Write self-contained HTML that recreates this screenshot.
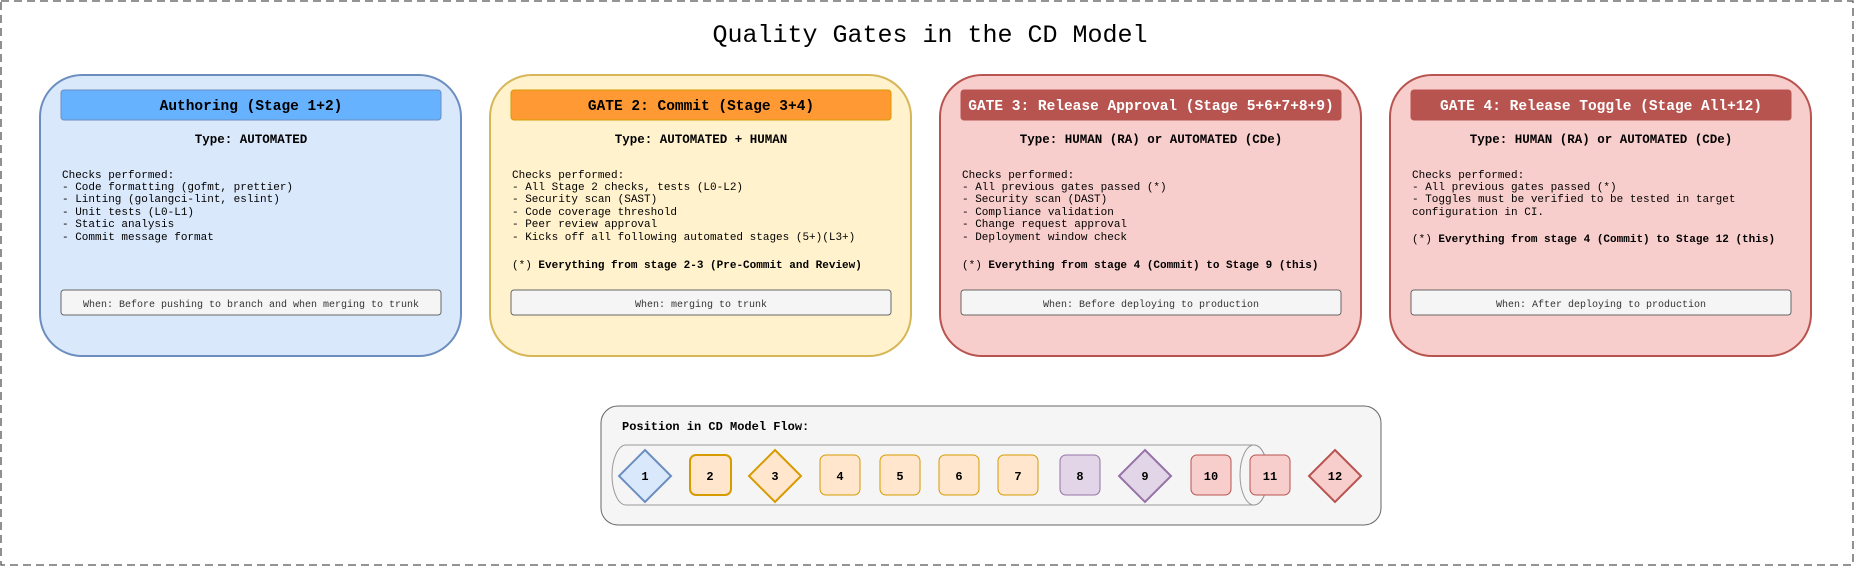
<!DOCTYPE html>
<html><head><meta charset="utf-8"><style>
html,body{margin:0;padding:0;background:#fff;}
svg{display:block;}
text{font-family:"Liberation Mono","DejaVu Sans Mono",monospace;}
</style></head><body>
<svg width="1861" height="567" viewBox="0 0 1861 567" xmlns="http://www.w3.org/2000/svg">
<rect x="1" y="1" width="1852" height="564" fill="#fff" stroke="#555" stroke-width="1.3" stroke-dasharray="8 5"/>
<text x="930" y="42" font-size="25" text-anchor="middle" fill="#000">Quality Gates in the CD Model</text>

<!-- Card 1 -->
<rect x="40" y="75" width="421" height="281" rx="42" fill="#dae8fc" stroke="#6c8ebf" stroke-width="2"/>
<rect x="61" y="90" width="380" height="30" rx="3" fill="#66b2ff" stroke="#6c8ebf"/>
<text x="251" y="110" font-size="14.5" font-weight="bold" text-anchor="middle">Authoring (Stage 1+2)</text>
<text x="251" y="143" font-size="12.5" font-weight="bold" text-anchor="middle">Type: AUTOMATED</text>
<g font-size="11" fill="#000">
<text x="62" y="178">Checks performed:</text>
<text x="62" y="190">- Code formatting (gofmt, prettier)</text>
<text x="62" y="202">- Linting (golangci-lint, eslint)</text>
<text x="62" y="215">- Unit tests (L0-L1)</text>
<text x="62" y="227">- Static analysis</text>
<text x="62" y="240">- Commit message format</text>
</g>
<rect x="61" y="290" width="380" height="25" rx="3" fill="#f5f5f5" stroke="#666"/>
<text x="251" y="307" font-size="10" text-anchor="middle" fill="#333">When: Before pushing to branch and when merging to trunk</text>

<!-- Card 2 -->
<rect x="490" y="75" width="421" height="281" rx="42" fill="#fff2cc" stroke="#d6b656" stroke-width="2"/>
<rect x="511" y="90" width="380" height="30" rx="3" fill="#ff9933" stroke="#d79b00"/>
<text x="701" y="110" font-size="14.5" font-weight="bold" text-anchor="middle">GATE 2: Commit (Stage 3+4)</text>
<text x="701" y="143" font-size="12.5" font-weight="bold" text-anchor="middle">Type: AUTOMATED + HUMAN</text>
<g font-size="11" fill="#000">
<text x="512" y="178">Checks performed:</text>
<text x="512" y="190">- All Stage 2 checks, tests (L0-L2)</text>
<text x="512" y="202">- Security scan (SAST)</text>
<text x="512" y="215">- Code coverage threshold</text>
<text x="512" y="227">- Peer review approval</text>
<text x="512" y="240">- Kicks off all following automated stages (5+)(L3+)</text>
<text x="512" y="268">(*) <tspan font-weight="bold">Everything from stage 2-3 (Pre-Commit and Review)</tspan></text>
</g>
<rect x="511" y="290" width="380" height="25" rx="3" fill="#f5f5f5" stroke="#666"/>
<text x="701" y="307" font-size="10" text-anchor="middle" fill="#333">When: merging to trunk</text>

<!-- Card 3 -->
<rect x="940" y="75" width="421" height="281" rx="42" fill="#f8cecc" stroke="#b85450" stroke-width="2"/>
<rect x="961" y="90" width="380" height="30" rx="3" fill="#b85450" stroke="#b85450"/>
<text x="1151" y="110" font-size="14.5" font-weight="bold" text-anchor="middle" fill="#fff">GATE 3: Release Approval (Stage 5+6+7+8+9)</text>
<text x="1151" y="143" font-size="12.5" font-weight="bold" text-anchor="middle">Type: HUMAN (RA) or AUTOMATED (CDe)</text>
<g font-size="11" fill="#000">
<text x="962" y="178">Checks performed:</text>
<text x="962" y="190">- All previous gates passed (*)</text>
<text x="962" y="202">- Security scan (DAST)</text>
<text x="962" y="215">- Compliance validation</text>
<text x="962" y="227">- Change request approval</text>
<text x="962" y="240">- Deployment window check</text>
<text x="962" y="268">(*) <tspan font-weight="bold">Everything from stage 4 (Commit) to Stage 9 (this)</tspan></text>
</g>
<rect x="961" y="290" width="380" height="25" rx="3" fill="#f5f5f5" stroke="#666"/>
<text x="1151" y="307" font-size="10" text-anchor="middle" fill="#333">When: Before deploying to production</text>

<!-- Card 4 -->
<rect x="1390" y="75" width="421" height="281" rx="42" fill="#f8cecc" stroke="#b85450" stroke-width="2"/>
<rect x="1411" y="90" width="380" height="30" rx="3" fill="#b85450" stroke="#b85450"/>
<text x="1601" y="110" font-size="14.5" font-weight="bold" text-anchor="middle" fill="#fff">GATE 4: Release Toggle (Stage All+12)</text>
<text x="1601" y="143" font-size="12.5" font-weight="bold" text-anchor="middle">Type: HUMAN (RA) or AUTOMATED (CDe)</text>
<g font-size="11" fill="#000">
<text x="1412" y="178">Checks performed:</text>
<text x="1412" y="190">- All previous gates passed (*)</text>
<text x="1412" y="202">- Toggles must be verified to be tested in target</text>
<text x="1412" y="215">configuration in CI.</text>
<text x="1412" y="242">(*) <tspan font-weight="bold">Everything from stage 4 (Commit) to Stage 12 (this)</tspan></text>
</g>
<rect x="1411" y="290" width="380" height="25" rx="3" fill="#f5f5f5" stroke="#666"/>
<text x="1601" y="307" font-size="10" text-anchor="middle" fill="#333">When: After deploying to production</text>

<!-- Bottom panel -->
<rect x="601" y="406" width="780" height="119" rx="17" fill="#f5f5f5" stroke="#666"/>
<text x="622" y="430" font-size="12" font-weight="bold">Position in CD Model Flow:</text>
<!-- cylinder -->
<path d="M626 445 L1254 445 A14 30 0 0 1 1254 505 L626 505 A14 30 0 0 1 626 445 Z" fill="#f5f5f5" stroke="#999"/>
<ellipse cx="1254" cy="475" rx="14" ry="30" fill="none" stroke="#999"/>

<g font-size="12" font-weight="bold" text-anchor="middle">
<polygon points="645,450 671,476 645,502 619,476" fill="#dae8fc" stroke="#6c8ebf" stroke-width="2"/>
<text x="645" y="480">1</text>
<rect x="690" y="455" width="41" height="40" rx="6" fill="#ffe6cc" stroke="#d79b00" stroke-width="2"/>
<text x="710" y="480">2</text>
<polygon points="775,450 801,476 775,502 749,476" fill="#ffe6cc" stroke="#d79b00" stroke-width="2"/>
<text x="775" y="480">3</text>
<rect x="820" y="455" width="40" height="40" rx="6" fill="#ffe6cc" stroke="#d79b00"/>
<text x="840" y="480">4</text>
<rect x="880" y="455" width="40" height="40" rx="6" fill="#ffe6cc" stroke="#d79b00"/>
<text x="900" y="480">5</text>
<rect x="939" y="455" width="40" height="40" rx="6" fill="#ffe6cc" stroke="#d79b00"/>
<text x="959" y="480">6</text>
<rect x="998" y="455" width="40" height="40" rx="6" fill="#ffe6cc" stroke="#d79b00"/>
<text x="1018" y="480">7</text>
<rect x="1060" y="455" width="40" height="40" rx="6" fill="#e1d5e7" stroke="#9673a6"/>
<text x="1080" y="480">8</text>
<polygon points="1145,450 1171,476 1145,502 1119,476" fill="#e1d5e7" stroke="#9673a6" stroke-width="2"/>
<text x="1145" y="480">9</text>
<rect x="1191" y="455" width="40" height="40" rx="6" fill="#f8cecc" stroke="#b85450"/>
<text x="1211" y="480">10</text>
<rect x="1250" y="455" width="40" height="40" rx="6" fill="#f8cecc" stroke="#b85450"/>
<text x="1270" y="480">11</text>
<polygon points="1335,450 1361,476 1335,502 1309,476" fill="#f8cecc" stroke="#b85450" stroke-width="2"/>
<text x="1335" y="480">12</text>
</g>
</svg>
</body></html>
